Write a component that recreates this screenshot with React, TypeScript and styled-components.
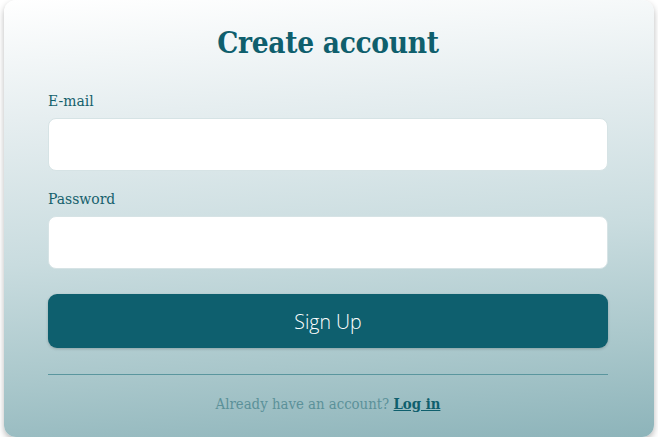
import React from "react";
import styled, { createGlobalStyle } from "styled-components";

const Global = createGlobalStyle`
  html, body { margin: 0; padding: 0; background: #ffffff; }
  body { font-family: "DejaVu Serif", serif; }
  * { box-sizing: border-box; }
`;

const Page = styled.div`
  padding: 0 4px;
  width: 658px;
`;

const Card = styled.form`
  width: 650px;
  height: 437px;
  border-radius: 12px;
  background: linear-gradient(176deg, #ffffff 0%, #e6eef0 25%, #c9dcdf 55%, #a9c7cb 80%, #8db4ba 100%);
  box-shadow: 0 3px 6px rgba(0, 0, 0, 0.28);
  padding: 23px 46px 0 44px;
  display: flex;
  flex-direction: column;
`;

const Title = styled.h1`
  margin: 0;
  font-family: "DejaVu Serif", serif;
  font-stretch: condensed;
  font-size: 29.5px;
  line-height: 40px;
  font-weight: 700;
  color: #0f5f6d;
  text-align: center;
  letter-spacing: -0.3px;
`;

const Field = styled.div<{ $top: number }>`
  display: flex;
  flex-direction: column;
  gap: 7px;
  margin-top: ${(p) => p.$top}px;
`;

const Label = styled.label`
  font-family: "DejaVu Serif", serif;
  font-stretch: condensed;
  font-size: 15.5px;
  line-height: 20px;
  color: #15606c;
`;

const Input = styled.input`
  height: 53px;
  width: 100%;
  border: 1px solid #d6e3e5;
  border-radius: 8px;
  background: #ffffff;
  outline: none;
  font-size: 16px;
  padding: 0 14px;
`;

const Button = styled.button`
  margin-top: 25px;
  height: 54px;
  width: 100%;
  border: none;
  border-radius: 9px;
  background: #0e5f6e;
  color: #ffffff;
  font-family: "Open Sans", sans-serif;
  font-weight: 300;
  font-size: 19.5px;
  box-shadow: 0 1px 3px rgba(0, 0, 0, 0.2);
  cursor: pointer;
`;

const Divider = styled.hr`
  margin: 26px 0 0 0;
  border: none;
  height: 1px;
  background: #5a969e;
`;

const Footer = styled.p`
  margin: 19px 0 0 0;
  text-align: center;
  font-family: "DejaVu Serif", serif;
  font-stretch: condensed;
  font-size: 14.8px;
  line-height: 20px;
  color: #5b9199;
`;

const Link = styled.a`
  color: #0f5f6d;
  font-weight: 700;
  text-decoration: underline;
`;

export default function App() {
  return (
    <Page>
      <Global />
      <Card onSubmit={(e) => e.preventDefault()}>
        <Title>Create account</Title>
        <Field $top={28}>
          <Label htmlFor="email">E-mail</Label>
          <Input id="email" type="email" />
        </Field>
        <Field $top={18}>
          <Label htmlFor="password">Password</Label>
          <Input id="password" type="password" />
        </Field>
        <Button type="submit">Sign Up</Button>
        <Divider />
        <Footer>
          Already have an account? <Link href="#">Log in</Link>
        </Footer>
      </Card>
    </Page>
  );
}
